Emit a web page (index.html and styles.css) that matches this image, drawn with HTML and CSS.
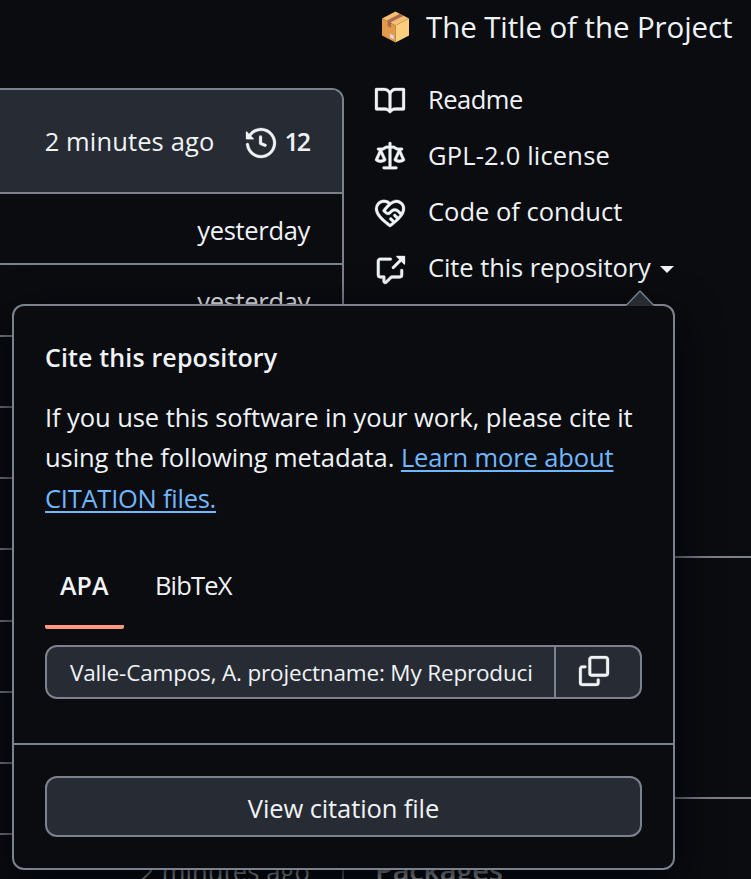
FILE: index.html
```html
<!DOCTYPE html>
<html lang="en">
<head>
<meta charset="utf-8">
<title>Cite this repository</title>
<link rel="stylesheet" href="styles.css">
</head>
<body>
<div class="page">
  <main class="files">
    <div class="files-head">
      <span class="ago">2 minutes ago</span>
      <svg class="icon" viewBox="0 0 16 16"><path d="m.427 1.927 1.215 1.215a8.002 8.002 0 1 1-1.6 5.685.75.75 0 1 1 1.493-.154 6.5 6.5 0 1 0 1.18-4.458l1.358 1.358A.25.25 0 0 1 3.896 6H.25A.25.25 0 0 1 0 5.75V2.104a.25.25 0 0 1 .427-.177ZM7.75 4a.75.75 0 0 1 .75.75v2.992l2.028.812a.75.75 0 0 1-.557 1.392l-2.5-1A.751.751 0 0 1 7 8.25v-3.5A.75.75 0 0 1 7.75 4Z"/></svg>
      <span class="count">12</span>
    </div>
    <div class="file-row"><span class="day">yesterday</span></div>
    <div class="file-row"><span class="day">yesterday</span></div>
    <div class="file-row"></div>
    <div class="file-row"></div>
    <div class="file-row"></div>
    <div class="file-row"></div>
    <div class="file-row"></div>
    <div class="file-row"></div>
    <div class="file-row"></div>
    <div class="file-row"><span class="ago">2 minutes ago</span></div>
  </main>

  <aside class="sidebar">
    <section class="about">
      <div class="project">
        <svg class="package" viewBox="0 0 28 32"><path fill="#f5bf72" d="M14 .5 27.5 7.500 14 14.500.5 7.500Z"/><path fill="#e39a4c" d="M.5 7.500 14 14.500V31.500L.5 24.500Z"/><path fill="#ffce7c" d="M27.500 7.500 14 14.500V31.500l13.500-7Z"/><path fill="#a96b50" d="M18.300 2.700 6 9.200v5.700l3.600 1.900V11l12.600-6.300Z"/><path fill="#d9d9d9" d="m8.500 22.500 3.800 2v4l-3.800-2Z"/></svg>
        <span class="project-title">The Title of the Project</span>
      </div>
      <ul class="links">
        <li><svg class="icon" viewBox="0 0 16 16"><path d="M0 1.750A.75.75 0 0 1 .75 1h4.253c1.227 0 2.317.59 3 1.501A3.743 3.743 0 0 1 11.006 1h4.245a.75.75 0 0 1 .75.75v10.500a.75.75 0 0 1-.75.75h-4.507a2.250 2.250 0 0 0-1.591.659l-.622.621a.75.75 0 0 1-1.060 0l-.622-.621A2.250 2.250 0 0 0 5.258 13H.75a.75.75 0 0 1-.75-.75Zm7.251 10.324.004-5.073-.002-2.253A2.250 2.250 0 0 0 5.003 2.500H1.500v9h3.757a3.750 3.750 0 0 1 1.994.574ZM8.755 4.750l-.004 7.322a3.752 3.752 0 0 1 1.992-.572H14.500v-9h-3.495a2.250 2.250 0 0 0-2.250 2.250Z"/></svg><span class="readme">Readme</span></li>
        <li><svg class="icon" viewBox="0 0 16 16"><path d="M8.750.75V2h.985c.304 0 .603.080.867.231l1.290.736c.038.022.080.033.124.033h2.234a.75.75 0 0 1 0 1.500h-.427l2.111 4.692a.75.75 0 0 1-.154.838c-.23.220-.470.400-.732.522C14.556 10.780 13.880 11 13 11a4.498 4.498 0 0 1-2.023-.454 3.544 3.544 0 0 1-.762-.516.75.75 0 0 1-.154-.838L12.178 4.500h-.162c-.305 0-.604-.079-.868-.231l-1.290-.736a.245.245 0 0 0-.124-.033H8.750V13h2.500a.75.75 0 0 1 0 1.500h-6.500a.75.75 0 0 1 0-1.500h2.500V3.500h-.984a.245.245 0 0 0-.124.033l-1.289.737c-.265.150-.564.230-.869.230h-.162l2.112 4.692a.75.75 0 0 1-.154.838c-.230.220-.470.400-.755.522C4.556 10.780 3.880 11 3 11a4.498 4.498 0 0 1-2.023-.454 3.544 3.544 0 0 1-.757-.516.75.75 0 0 1-.154-.838L2.178 4.500H1.750a.75.75 0 0 1 0-1.500h2.234a.249.249 0 0 0 .125-.033l1.288-.737c.265-.150.564-.230.869-.230h.984V.75a.75.75 0 0 1 1.500 0Zm2.945 8.477c.285.135.718.273 1.305.273s1.020-.138 1.305-.273L13 6.327Zm-10 0c.285.135.718.273 1.305.273s1.020-.138 1.305-.273L3 6.327Z"/></svg><span class="license">GPL-2.0 license</span></li>
        <li><svg class="icon" viewBox="0 0 16 16"><path d="M8.048 2.241c.964-.709 2.079-1.238 3.325-1.241a4.616 4.616 0 0 1 3.282 1.355c.41.408.757.86.996 1.428.238.568.348 1.206.347 1.968 0 2.193-1.505 4.254-3.081 5.862-1.496 1.526-3.213 2.796-4.249 3.563l-.22.163a.749.749 0 0 1-.895 0l-.221-.163c-1.036-.767-2.753-2.037-4.249-3.563C1.510 10.008.007 7.952.002 5.762a4.614 4.614 0 0 1 1.353-3.407C3.123.585 6.223.537 8.048 2.240Zm-1.153.983c-1.250-1.033-3.321-.967-4.480.191a3.115 3.115 0 0 0-.913 2.335c0 1.556 1.109 3.240 2.652 4.813C5.463 11.898 6.960 13.032 8 13.805c.353-.262.758-.565 1.191-.905l-1.326-1.223a.75.75 0 0 1 1.018-1.102l1.480 1.366c.328-.281.659-.577.984-.887L9.990 9.802a.75.75 0 1 1 1.019-1.103l1.384 1.280c.295-.329.566-.661.810-.995L12.920 8.700l-1.167-1.168c-.674-.671-1.780-.664-2.474.030-.268.269-.538.537-.802.797-.893.882-2.319.843-3.185-.032-.346-.350-.693-.697-1.043-1.047a.75.75 0 0 1-.040-1.016c.162-.191.336-.401.520-.623.620-.748 1.356-1.637 2.166-2.417Zm7.112 4.442c.313-.650.491-1.293.491-1.916v-.001c0-.614-.088-1.045-.230-1.385-.143-.339-.357-.633-.673-.949a3.111 3.111 0 0 0-2.218-.915c-1.092.003-2.165.627-3.226 1.602-.823.755-1.554 1.637-2.228 2.450l-.127.154.562.566a.755.755 0 0 0 1.066.020l.794-.790c1.258-1.258 3.312-1.310 4.594-.032.396.394.792.791 1.173 1.173Z"/></svg><span class="conduct">Code of conduct</span></li>
        <li><svg class="icon" viewBox="0 0 16 16"><path d="M2.750 3.500a.25.25 0 0 0-.25.25v7.500c0 .138.112.25.25.25h2a.75.75 0 0 1 .75.75v2.190l2.720-2.720a.749.749 0 0 1 .53-.22h4.500a.25.25 0 0 0 .25-.25v-2.500a.75.75 0 0 1 1.500 0v2.500A1.750 1.750 0 0 1 13.250 13H9.060l-2.573 2.573A1.458 1.458 0 0 1 4 14.543V13H2.750A1.750 1.750 0 0 1 1 11.250v-7.500C1 2.784 1.784 2 2.750 2h5.500a.75.75 0 0 1 0 1.500ZM16 1.250v4.146a.25.25 0 0 1-.427.177L14.030 4.030l-3.750 3.750a.749.749 0 0 1-1.275-.326.749.749 0 0 1 .215-.734l3.750-3.750-1.543-1.543A.25.25 0 0 1 11.604 1h4.146a.25.25 0 0 1 .25.25Z"/></svg><span class="cite">Cite this repository</span><i class="caret"></i></li>
      </ul>
    </section>
    <section class="releases"></section>
    <section class="packages"><h2>Packages</h2></section>
  </aside>

  <div class="popover">
    <svg class="tip" viewBox="0 0 28 16"><path class="tip-fill" d="M0 16 14 1l14 15Z"/><path class="tip-edge" d="M.5 15 14 1l13.500 14"/></svg>
    <div class="popover-body">
      <h3>Cite this repository</h3>
      <p><span class="intro">If you use this software in your work, please cite it</span><br><span class="intro">using the following metadata. </span><a class="learn">Learn more about</a><br><a class="citation">CITATION files.</a></p>
      <div class="tabs">
        <span class="tab active">APA</span>
        <span class="tab bibtex">BibTeX</span>
      </div>
      <div class="copy-field">
        <div class="value"><span>Valle-Campos, A. projectname: My Reproduci</span></div>
        <div class="copy"><svg class="icon" viewBox="0 0 16 16"><path d="M0 6.750C0 5.784.784 5 1.750 5h1.500a.75.75 0 0 1 0 1.500h-1.500a.25.25 0 0 0-.25.25v7.500c0 .138.112.25.25.25h7.500a.25.25 0 0 0 .25-.25v-1.500a.75.75 0 0 1 1.500 0v1.500A1.750 1.750 0 0 1 9.250 16h-7.500A1.750 1.750 0 0 1 0 14.250Z"/><path d="M5 1.750C5 .784 5.784 0 6.750 0h7.500C15.216 0 16 .784 16 1.750v7.500A1.750 1.750 0 0 1 14.250 11h-7.500A1.750 1.750 0 0 1 5 9.250Zm1.750-.25a.25.25 0 0 0-.25.25v7.500c0 .138.112.25.25.25h7.500a.25.25 0 0 0 .25-.25v-7.500a.25.25 0 0 0-.25-.25Z"/></svg></div>
      </div>
    </div>
    <div class="popover-foot">
      <div class="button"><span>View citation file</span></div>
    </div>
  </div>
</div>
</body>
</html>
```
FILE: styles.css
```css
* { box-sizing: border-box; }
body {
  margin: 0;
  background: #0a0c10;
  color: #f0f3f6;
  font: 25.5px/40px "Open Sans", "Noto Sans", sans-serif;
}
.page {
  position: relative;
  display: flex;
  width: 751px;
  height: 879px;
  overflow: hidden;
}
span, a { white-space: pre; }
.icon { width: 30px; height: 30px; flex: none; fill: #f0f3f6; stroke: #f0f3f6; stroke-width: .15; overflow: visible; }

/* file list */
.files {
  flex: none;
  width: 344px;
  height: 900px;
  margin-top: 88px;
  border: 2px solid #7a828e;
  border-left: 0;
  border-radius: 0 12px 0 0;
}
.files-head {
  display: flex;
  align-items: center;
  justify-content: flex-end;
  height: 102px;
  padding-right: 33px;
  background: #272b33;
  border-radius: 0 10px 0 0;
}
.files-head .icon { margin: 3px 8px 0 32px; }
.ago { letter-spacing: .13px; }
.day { letter-spacing: -.32px; }
.count { font-weight: 600; font-size: 25px; letter-spacing: -2px; }
.files-head .count { margin-right: 0; }
.file-row {
  height: 71.25px;
  padding: 16px 32px 0 0;
  border-top: 2px solid #7a828e;
  text-align: right;
}

/* sidebar */
.sidebar { flex: none; width: 376px; margin-left: 31px; }
.about { height: 556px; padding-top: 7px; }
.project { display: flex; align-items: center; height: 40px; padding-left: 6px; }
.package { width: 29px; height: 32px; margin-right: 16px; }
.project-title { font-size: 29.500px; letter-spacing: -.1px; }
.links { list-style: none; margin: 24px 0 0; padding: 0; }
.links li { display: flex; align-items: center; height: 56px; }
.links .icon { margin: 3px 23px 0 0; }
.readme { letter-spacing: -.5px; }
.license { letter-spacing: .17px; }
.cite { letter-spacing: -.08px; }
.caret {
  margin: 5px 0 0 9px;
  border: 7.500px solid transparent;
  border-top-color: #f0f3f6;
  border-bottom: 0;
}
.releases { height: 241px; border-top: 2px solid #7a828e; }
.packages { border-top: 2px solid #7a828e; padding-top: 51px; }
h2 { margin: 0; font-size: 29px; font-weight: 600; letter-spacing: -.2px; }

/* popover */
.popover {
  position: absolute;
  left: 12px;
  top: 304px;
  width: 663px;
  height: 566px;
  border: 2px solid #7a828e;
  border-radius: 12px;
  background: #0a0c10;
  box-shadow: 0 15px 45px #010409;
}
.tip { position: absolute; left: 612px; top: -16px; width: 28px; height: 16px; }
.tip-fill { fill: #272b33; }
.tip-edge { fill: none; stroke: #7a828e; stroke-width: 1.300; }
.popover-body { height: 437px; padding: 31px 31px 0; }
h3 { margin: 0; font-size: 25px; line-height: 40px; font-weight: 600; letter-spacing: .14px; }
p { margin: 20px 0 0; line-height: 40.250px; }
.intro { letter-spacing: -.07px; }
.learn { letter-spacing: -.13px; }
.citation { letter-spacing: -.25px; }
a { color: #71b7ff; text-decoration: underline; text-decoration-thickness: 2px; text-underline-offset: 3px; }
.tabs { display: flex; height: 82px; margin-top: 28.750px; gap: 16px; }
.tab { padding: 17px 15px 0; height: 82px; line-height: 42px; }
.bibtex { letter-spacing: -.85px; }
.active { width: 79px; font-weight: 600; font-size: 25px; background: linear-gradient(#ff967d, #ff967d) 0 100% / 100% 4px no-repeat; border-radius: 2px; }
.copy-field {
  display: flex;
  height: 54px;
  margin-top: 16px;
  border: 2px solid #7a828e;
  border-radius: 12px;
  background: #272b33;
}
.value { width: 507px; padding: 6px 20px 0 23px; font-size: 22.500px; line-height: 40px; letter-spacing: -.17px; }
.value span { display: block; }
.copy { display: flex; flex: 1; align-items: center; justify-content: center; padding: 0 8px 2px 0; border-left: 2px solid #7a828e; }
.popover-foot { padding: 31px 31px 0; border-top: 2px solid #7a828e; }
.button {
  height: 61px;
  border: 2px solid #7a828e;
  border-radius: 12px;
  background: #272b33;
  text-align: center;
  line-height: 60px;
  letter-spacing: -.1px;
}
```
